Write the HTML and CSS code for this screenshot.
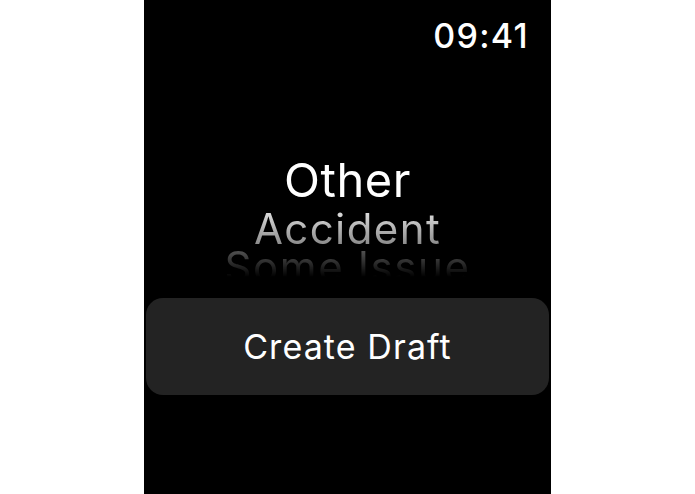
FILE: index.html
```html
<!DOCTYPE html>
<html>
<head>
<meta charset="utf-8">
<link rel="stylesheet" href="styles.css">
</head>
<body>
<div class="watch">
  <div class="status">
    <span class="time">09:41</span>
  </div>
  <div class="picker">
    <div class="item item-selected">Other</div>
    <div class="item item-next">Accident</div>
    <div class="item item-far">Some Issue</div>
  </div>
  <button class="action">Create Draft</button>
</div>
</body>
</html>
```
FILE: styles.css
```css
html, body {
  margin: 0;
  padding: 0;
  background: #ffffff;
}
body {
  font-family: Inter, Roboto, "Noto Sans", sans-serif;
}
.watch {
  width: 407px;
  height: 494px;
  margin: 0 auto;
  background: #000000;
  display: flex;
  flex-direction: column;
  align-items: stretch;
  box-sizing: border-box;
  padding: 0 2px;
}
.status {
  display: flex;
  justify-content: flex-end;
  padding: 19px 20px 0 0;
  height: 34px;
}
.time {
  color: #ffffff;
  font-size: 34px;
  font-weight: 500;
  line-height: 34px;
  letter-spacing: 1.3px;
}
.picker {
  margin-top: 103px;
  height: 121px;
  overflow: hidden;
  display: flex;
  flex-direction: column;
  align-items: center;
  -webkit-mask-image: linear-gradient(to bottom, #000 0%, #000 75%, transparent 100%);
  mask-image: linear-gradient(to bottom, #000 0%, #000 75%, transparent 100%);
}
.item {
  white-space: nowrap;
  flex: none;
}
.item-selected {
  color: #ffffff;
  font-size: 47px;
  line-height: 47px;
  height: 52px;
  letter-spacing: 0.6px;
}
.item-next {
  font-size: 42px;
  line-height: 42px;
  height: 38px;
  letter-spacing: 1.4px;
  background: linear-gradient(to bottom, #dcdcdc 10%, #8c8c8c 95%);
  -webkit-background-clip: text;
  background-clip: text;
  color: transparent;
}
.item-far {
  font-size: 42px;
  line-height: 42px;
  height: 42px;
  letter-spacing: 1.6px;
  color: #5e5e5e;
}
.action {
  margin-top: 21px;
  height: 97px;
  border: none;
  border-radius: 17px;
  background: #232323;
  color: #ffffff;
  font-family: Inter, Roboto, "Noto Sans", sans-serif;
  font-size: 34px;
  letter-spacing: 1.1px;
  padding: 0;
}
```
